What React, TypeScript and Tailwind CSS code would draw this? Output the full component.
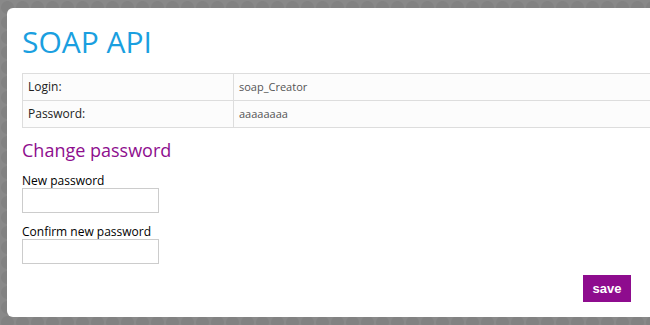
import React from "react";

export default function App() {
  return (
    <div
      className="w-[650px] h-[325px] overflow-hidden bg-[#898989] bg-[radial-gradient(circle_at_center,#828282_0px,#828282_6px,transparent_7px)] bg-size-[15px_15px] pl-[7px] pt-[8px] pb-[8px] flex"
    >
      <div className="flex-1 min-w-0 overflow-hidden h-[309px] bg-white rounded-l-[6px] pl-[15px] pt-[19px] flex flex-col font-['Open_Sans',sans-serif]">
        <h1 className="text-[30px] leading-[30px] text-[#1a9fe0] font-normal">SOAP API</h1>
        <table className="mt-[16px] border-collapse w-[640px] text-left">
          <tbody>
            <tr className="h-[27px] bg-[#fcfcfc]">
              <td className="w-[211px] border border-[#dddddd] pl-[5px] text-[12px] text-[#222] py-0">Login:</td>
              <td className="border border-[#dddddd] pl-[5px] text-[11px] text-[#555] py-0">soap_Creator</td>
            </tr>
            <tr className="h-[27px] bg-[#fcfcfc]">
              <td className="w-[211px] border border-[#dddddd] pl-[5px] text-[12px] text-[#222] py-0">Password:</td>
              <td className="border border-[#dddddd] pl-[5px] text-[11px] text-[#555] py-0">aaaaaaaa</td>
            </tr>
          </tbody>
        </table>
        <h2 className="mt-[10px] text-[18px] leading-[24px] text-[#8e0e8e] font-normal">Change password</h2>
        <label className="mt-[11px] text-[12px] leading-[15px] text-black">New password</label>
        <input type="password" className="w-[137px] h-[25px] border border-[#cccccc] bg-white outline-none" />
        <label className="mt-[11px] text-[12px] leading-[15px] text-black">Confirm new password</label>
        <input type="password" className="w-[137px] h-[25px] border border-[#cccccc] bg-white outline-none" />
        <div className="flex mt-[11px]">
          <button className="ml-[561px] w-[48px] h-[27px] bg-[#8e0c8e] text-white text-[13px] font-bold font-['Liberation_Sans',Arial,sans-serif] leading-none">
            save
          </button>
        </div>
      </div>
    </div>
  );
}
